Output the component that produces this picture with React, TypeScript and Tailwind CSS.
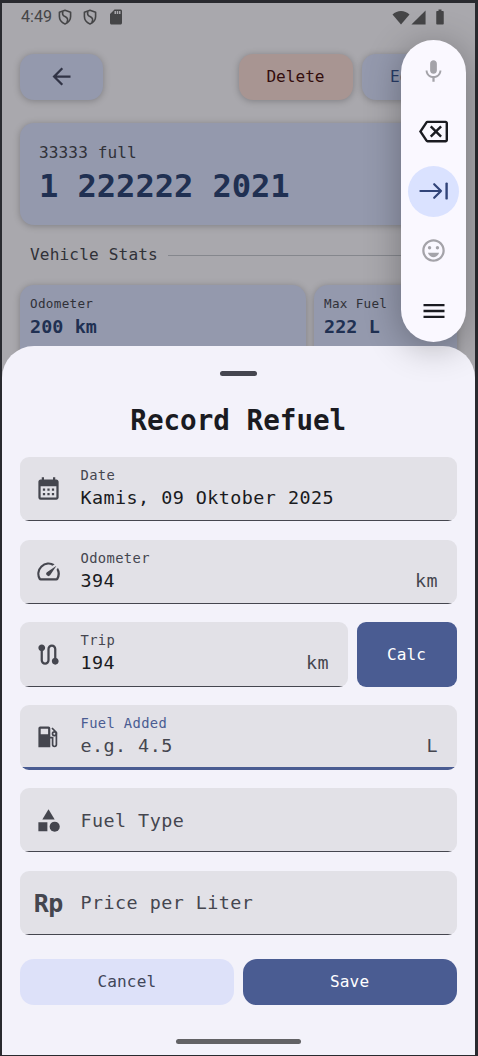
import React from "react";
import {
  MdArrowBack, MdCalendarMonth, MdSpeed, MdRoute, MdCategory, MdMic, MdOutlineBackspace,
  MdOutlineEmojiEmotions, MdMenu, MdSdCard, MdSignalCellular4Bar, MdBatteryFull,
} from "react-icons/md";

function Shield() {
  return (
    <svg viewBox="0 0 14 16" className="h-4 w-3.5" fill="none" stroke="#454547" strokeWidth="1.6">
      <path d="M7 1.3 12.6 3.2V7.6C12.6 11 10.3 13.6 7 14.9 3.7 13.6 1.4 11 1.4 7.6V3.2Z" strokeLinejoin="round" />
      <path d="M5 2.4C4 4.8 4.8 6.6 7 7.6 9.8 8.9 10.4 10.6 8.8 13.6" />
    </svg>
  );
}

function TabKey() {
  return (
    <svg viewBox="0 0 30 18" className="h-[18px] w-[30px]" fill="none" stroke="#314479" strokeWidth="2.2" strokeLinecap="round" strokeLinejoin="round">
      <path d="M1.4 9H22M15.2 2.2 22 9 15.2 15.8" />
      <path d="M27.6 1.6V16.4" strokeWidth="2.4" />
    </svg>
  );
}

function FuelPump() {
  return (
    <svg viewBox="0 0 20 22" className="h-[22px] w-5" fill="#45464f">
      <path fillRule="evenodd" d="M2.2 .5h8.3a1.8 1.8 0 0 1 1.8 1.8v19H.4v-19A1.8 1.8 0 0 1 2.2 .5ZM2.7 2.8v5.4h7.4V2.8Z" />
      <path fill="none" stroke="#45464f" strokeWidth="1.7" d="M12 11.6h2.6v7a1.9 1.9 0 0 0 3.8 0V6.6L14 2" />
      <circle cx="16.4" cy="7.8" r="1.9" fill="none" stroke="#45464f" strokeWidth="1.7" />
    </svg>
  );
}

type FieldProps = {
  icon: React.ReactNode; label?: string; value: string; unit?: string; active?: boolean; muted?: boolean;
};

function Field({ icon, label, value, unit, active, muted }: FieldProps) {
  return (
    <div className="flex h-[64.4px] min-w-0 flex-1 flex-col overflow-hidden rounded-[9px] bg-[#e2e1e7]">
      <div className="flex min-h-0 flex-1">
        <div className="flex h-16 w-[60.5px] shrink-0 items-center justify-center pr-[4px] text-[#45464f]">{icon}</div>
        <div className={`flex h-16 flex-1 flex-col ${label ? "pt-[9px]" : "justify-center pt-px"}`}>
          {label && <span className={`text-[13.8px] leading-[18px] tracking-[0.36px] ${active ? "text-[#4a5c92]" : "text-[#45464f]"}`}>{label}</span>}
          <div className={`flex justify-between pr-[18.5px] text-[18.4px] leading-[28px] tracking-[0.45px] ${muted ? "text-[#45464f]" : "text-[#1a1b21]"}`}>
            <span>{value}</span>
            {unit && <span className="text-[#45464f]">{unit}</span>}
          </div>
        </div>
      </div>
      <div className={`shrink-0 ${active ? "h-[2.5px] bg-[#4a5c92]" : "h-px bg-[#45464f]"}`} />
    </div>
  );
}

function Stat({ label, value }: { label: string; value: string }) {
  return (
    <div className="h-[86px] rounded-[14px] bg-[#9499ad] px-[10px] pt-[9px] shadow-[0_1px_7px_rgba(0,0,0,0.25)]">
      <div className="text-[12.65px] leading-[20px] tracking-[0.3px] text-[#303138]">{label}</div>
      <div className="text-[18.4px] leading-[26px] font-bold tracking-[0.1px] text-[#203052]">{value}</div>
    </div>
  );
}

export default function App() {
  return (
    <div className="relative h-[1056px] w-[478px] overflow-hidden bg-[#292a2f] pt-[3px] pr-[3px] pb-px pl-[2px] font-['DejaVu_Sans_Mono',monospace]">
      <div className="h-[1052px] overflow-hidden bg-[#a9a8ad]">
        <div className="flex h-7 items-center pl-[19px] text-[#454547]">
          <span className="w-[37px] font-['Roboto',sans-serif] text-[16.1px] leading-7">4:49</span>
          <Shield />
          <span className="w-[11px]" />
          <Shield />
          <MdSdCard className="ml-[10px] size-[18px]" />
          <svg viewBox="0 0 18 15" className="ml-[267px] h-[15px] w-[18px]" fill="#454547"><path d="M0.5 4.5C5-.3 13-.3 17.5 4.5L9 14.5Z" /></svg>
          <MdSignalCellular4Bar className="size-[17px]" />
          <MdBatteryFull className="ml-[4px] size-[18px]" />
        </div>
        <div className="flex pt-[22.7px] pl-[18px]">
          <div className="flex h-[46px] w-[83px] items-center justify-center rounded-[14px] bg-[#9499ad] text-[#303345] shadow-[0_1px_7px_rgba(0,0,0,0.25)]"><MdArrowBack className="size-[27px]" /></div>
          <div className="ml-[136px] flex h-[46px] w-[114px] items-center justify-center rounded-[14px] bg-[#a89592] pr-px text-[16.1px] text-[#330d0d] shadow-[0_1px_7px_rgba(0,0,0,0.25)]">Delete</div>
          <div className="ml-[9px] flex h-[46px] w-[95px] items-center justify-center rounded-[14px] bg-[#9499ad] text-[16.1px] tracking-[0.1px] text-[#283b66] shadow-[0_1px_7px_rgba(0,0,0,0.25)]">Edit</div>
        </div>
        <div className="mx-[18px] mt-[23px] h-[102.5px] rounded-[14px] bg-[#9499ad] px-[19px] pt-[19px] shadow-[0_1px_7px_rgba(0,0,0,0.25)]">
          <div className="text-[16.1px] leading-[22px] tracking-[0.1px] text-[#303138]">33333 full</div>
          <div className="text-[32.2px] leading-[44px] font-bold tracking-[-0.1px] whitespace-nowrap text-[#203052]">1 222222 2021</div>
        </div>
        <div className="flex h-[60px] items-center gap-[10px] pl-7 text-[16.1px] tracking-[0.15px] text-[#303138]">
          <span>Vehicle Stats</span><span className="mr-[18px] h-px flex-1 bg-[#85878d]" />
        </div>
        <div className="grid grid-cols-[286px_143px] gap-2 pl-[18px]">
          <Stat label="Odometer" value="200 km" />
          <Stat label="Max Fuel" value="222 L" />
        </div>
      </div>

      <main className="absolute top-[346px] right-[3px] bottom-px left-[2px] flex flex-col rounded-t-[32px] bg-[#f3f2fa] pr-[18.5px] pl-[18px]">
        <div className="mx-auto mt-[25px] h-[5px] w-[37px] rounded-full bg-[#45464f]" />
        <h1 className="mt-[25.5px] h-[55.4px] text-center text-[27.6px] leading-[37px] font-bold text-[#1a1b21]">Record Refuel</h1>
        <div className="flex flex-col gap-[18.4px]">
          <div className="flex"><Field icon={<MdCalendarMonth className="size-[27px]" />} label="Date" value="Kamis, 09 Oktober 2025" /></div>
          <div className="flex"><Field icon={<MdSpeed className="size-[27px]" />} label="Odometer" value="394" unit="km" /></div>
          <div className="flex gap-[9px]">
            <Field icon={<MdRoute className="size-[27px]" />} label="Trip" value="194" unit="km" />
            <button className="h-[64.4px] w-[100px] rounded-[9px] bg-[#4a5c92] text-[16.1px] tracking-[0.1px] text-white">Calc</button>
          </div>
          <div className="flex"><Field icon={<FuelPump />} label="Fuel Added" value="e.g. 4.5" unit="L" active muted /></div>
          <div className="flex"><Field icon={<MdCategory className="size-[27px]" />} value="Fuel Type" muted /></div>
          <div className="flex"><Field icon={<span className="pt-px text-[25px] font-bold tracking-[-0.5px]">Rp</span>} value="Price per Liter" muted /></div>
        </div>
        <div className="mt-[24px] grid grid-cols-2 gap-[9px] text-[16.1px] tracking-[0.1px]">
          <button className="h-[46px] rounded-[14px] bg-[#dde1f9] text-[#414659]">Cancel</button>
          <button className="h-[46px] rounded-[14px] bg-[#4a5c92] text-white">Save</button>
        </div>
        <div className="mx-auto mt-[34px] h-[5px] w-[125px] rounded-full bg-[#626265]" />
      </main>

      <aside className="absolute top-10 left-[401px] flex h-[302px] w-[65px] flex-col items-center rounded-full bg-[#faf8ff] pt-[6px] shadow-[0_5px_36px_rgba(0,0,0,0.3)]">
        <div className="flex h-[60px] items-center text-[#a4a3a9]"><MdMic className="size-[27px] -translate-y-[5px]" /></div>
        <div className="flex h-[50px] items-center text-[#1a1b21]"><MdOutlineBackspace className="size-[29px]" /></div>
        <div className="mt-[9.5px] flex size-[51px] items-center justify-center rounded-full bg-[#dae2ff]"><TabKey /></div>
        <div className="mt-[4px] flex h-[60px] items-center text-[#a4a3a9]"><MdOutlineEmojiEmotions className="size-[27px]" /></div>
        <div className="flex h-[60px] items-center text-[#1a1b21]"><MdMenu className="size-[28px]" /></div>
      </aside>
    </div>
  );
}
